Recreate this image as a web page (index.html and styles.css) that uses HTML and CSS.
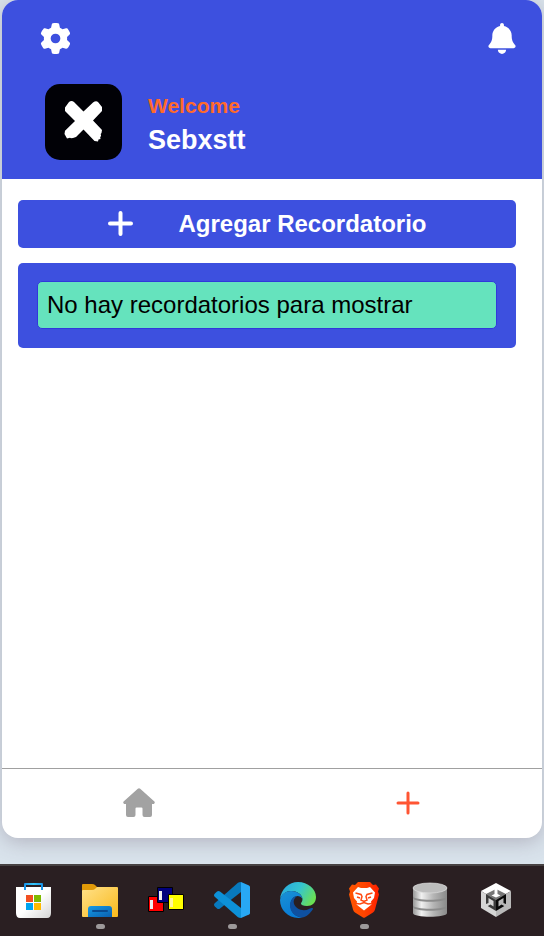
FILE: index.html
```html
<!DOCTYPE html>
<html lang="es">
<head>
<meta charset="utf-8">
<meta name="viewport" content="width=device-width, initial-scale=1">
<title>Recordatorios</title>
<link rel="stylesheet" href="styles.css">
</head>
<body>
<div class="app">
  <header class="header">
    <div class="toolbar">
      <button class="icon-button" type="button" aria-label="Ajustes">
        <svg class="gear" viewBox="0 0 512 512" fill="currentColor"><path d="M495.9 166.6c3.2 8.7 .5 18.4-6.4 24.6l-43.3 39.4c1.1 8.3 1.7 16.8 1.7 25.4s-.6 17.1-1.7 25.4l43.3 39.4c6.9 6.2 9.6 15.9 6.4 24.6c-4.4 11.9-9.7 23.3-15.8 34.3l-4.7 8.1c-6.6 11-14 21.4-22.1 31.2c-5.9 7.2-15.7 9.6-24.5 6.8l-55.7-17.7c-13.4 10.3-28.2 18.9-44 25.4l-12.5 57.1c-2 9.1-9 16.3-18.2 17.8c-13.8 2.3-28 3.5-42.5 3.5s-28.7-1.2-42.5-3.5c-9.2-1.5-16.2-8.7-18.2-17.8l-12.5-57.1c-15.8-6.5-30.6-15.1-44-25.4L83.1 425.9c-8.8 2.8-18.6 .3-24.5-6.8c-8.1-9.8-15.5-20.2-22.1-31.2l-4.7-8.1c-6.1-11-11.4-22.4-15.8-34.3c-3.2-8.7-.5-18.4 6.4-24.6l43.3-39.4C64.6 273.1 64 264.6 64 256s.6-17.1 1.7-25.4L22.4 191.2c-6.9-6.2-9.6-15.9-6.4-24.6c4.4-11.9 9.7-23.3 15.8-34.3l4.7-8.1c6.6-11 14-21.4 22.1-31.2c5.9-7.2 15.7-9.6 24.5-6.8l55.7 17.7c13.4-10.3 28.2-18.9 44-25.4l12.5-57.1c2-9.1 9-16.3 18.2-17.8C227.3 1.2 241.5 0 256 0s28.7 1.2 42.5 3.5c9.2 1.5 16.2 8.7 18.2 17.8l12.5 57.1c15.8 6.5 30.6 15.1 44 25.4l55.7-17.7c8.8-2.8 18.6-.3 24.5 6.8c8.1 9.8 15.5 20.2 22.1 31.2l4.7 8.1c6.1 11 11.4 22.4 15.8 34.3zM256 336a80 80 0 1 0 0-160 80 80 0 1 0 0 160z"/></svg>
      </button>
      <button class="icon-button" type="button" aria-label="Notificaciones">
        <svg class="bell" viewBox="0 0 448 512" fill="currentColor"><path d="M224 0c-17.7 0-32 14.3-32 32V51.2C119 66 64 130.6 64 208v18.8c0 47-17.3 92.4-48.5 127.6l-7.4 8.3c-8.4 9.4-10.4 22.9-5.3 34.4S19.4 416 32 416H416c12.6 0 24-7.4 29.2-18.9s3.1-25-5.3-34.4l-7.4-8.3C401.3 319.2 384 273.9 384 226.8V208c0-77.4-55-142-128-156.8V32c0-17.700-14.300-32-32-32zm68 442H156c0 17 9 38 22.700 51.300s28.300 18.700 45.300 18.700s33.300-6.700 45.300-18.700S292 459 292 442z"/></svg>
      </button>
    </div>
    <div class="profile">
      <svg class="avatar" viewBox="0 0 77 76" role="img" aria-label="Avatar">
        <path fill="#fff" d="M20 23.500l4-5.500q2.500-2 5 0l9.500 9.500L48 18.500q3-2 5-.5l4 5v4L48 36.500l9 9.500-.5 3-.8 1 .4 2-.9 1 .3 2-2 .5-.5 2-3.500-.5L38.500 45.500 31 53l-3 1-2 .3-1-.5-3 .7-2.500-4.500.5-3.300L30 37 20 27z"/>
      </svg>
      <div class="profile-text">
        <p class="welcome">Welcome</p>
        <h1 class="name">Sebxstt</h1>
      </div>
    </div>
  </header>

  <main class="content">
    <button class="add-button" type="button">
      <svg class="add-icon" viewBox="0 0 26 26" fill="none" stroke="currentColor" stroke-width="4" stroke-linecap="round"><path d="M13.500 2v21M3 12.500h21"/></svg>
      <span>Agregar Recordatorio</span>
    </button>
    <section class="reminders">
      <p class="empty">No hay recordatorios para mostrar</p>
    </section>
  </main>

  <nav class="tabs">
    <a class="tab" href="#inicio" aria-label="Inicio">
      <svg class="home-icon" viewBox="0 0 32 29" fill="currentColor"><path d="M14.800 .7q1.200-1 2.400 0L31.400 13.600q1 1.400-.6 2.400H29v11q0 2-2 2h-5.500q-2 0-2-2v-6.500q0-1-1-1h-5q-1 0-1 1V27q0 2-2 2H5q-2 0-2-2V16H1.200q-1.600-1-.6-2.400z"/></svg>
    </a>
    <a class="tab tab-active" href="#nuevo" aria-label="Nuevo">
      <svg class="plus-icon" viewBox="0 0 24 24" fill="none" stroke="currentColor" stroke-width="3" stroke-linecap="round"><path d="M12 2v20M2 12h20"/></svg>
    </a>
  </nav>
</div>

<footer class="taskbar">
  <button class="task" type="button" aria-label="Microsoft Store">
    <svg viewBox="0 0 36 36">
      <defs>
        <linearGradient id="bag" x1="0" y1="0" x2="1" y2="1"><stop offset=".5" stop-color="#fff"/><stop offset="1" stop-color="#d5d5d5"/></linearGradient>
        <linearGradient id="handle" x1="0" y1="0" x2="1" y2="0"><stop stop-color="#1691e8"/><stop offset=".5" stop-color="#38c7f8"/><stop offset="1" stop-color="#1691e8"/></linearGradient>
      </defs>
      <path fill="url(#bag)" d="M0 5h35v26q0 5-4 5H4q-4 0-4-5z"/>
      <path fill="url(#handle)" d="M8 8V2q0-1 1-1h17q1 0 1 1v6h-2V3H10v5z"/>
      <path fill="#f25022" d="M10 13h7v7h-7z"/><path fill="#7fba00" d="M18 13h7v7h-7z"/>
      <path fill="#00a4ef" d="M10 21h7v7h-7z"/><path fill="#ffb900" d="M18 21h7v7h-7z"/>
    </svg>
  </button>
  <button class="task running" type="button" aria-label="Explorador de archivos">
    <svg viewBox="0 0 36 36">
      <defs>
        <linearGradient id="folder" x1="0" y1="0" x2="1" y2="1"><stop stop-color="#ffe18a"/><stop offset="1" stop-color="#f9b91b"/></linearGradient>
        <linearGradient id="drawer" x1="0" y1="0" x2="1" y2="1"><stop stop-color="#159be6"/><stop offset="1" stop-color="#0a5fae"/></linearGradient>
      </defs>
      <path fill="#e19a08" d="M0 3q0-1 1-1h9q2 0 3 1l3 3v5H0z"/>
      <path fill="url(#folder)" d="M15 5h20q1 0 1 1v28q0 1-1 1H1q-1 0-1-1V9q0-1 1-1h9q2 0 3-1z"/>
      <path fill="url(#drawer)" d="M6 35v-8q0-3 3-3h18q3 0 3 3v8z"/>
      <path stroke="#084b91" stroke-width="2" stroke-linecap="round" d="M11 29h14"/>
    </svg>
  </button>
  <button class="task" type="button" aria-label="Bloques">
    <svg viewBox="0 0 36 36" stroke="#000">
      <path fill="#f00" d="M.5 14.500h15v15H.5z"/><path fill="#eee" stroke="none" d="M2 18h3v9H2z"/>
      <path fill="#00007c" d="M9.500 5.500h15v15h-15z"/><path fill="#eee" stroke="none" d="M11 9h3v9h-3z"/>
      <path fill="#ff0" d="M20.500 12.500h15v15h-15z"/><path fill="#fff5a0" stroke="none" d="M22 16h3v9h-3z"/>
    </svg>
  </button>
  <button class="task running" type="button" aria-label="Visual Studio Code">
    <svg viewBox="0 0 36 36">
      <path fill="#0879bd" d="M27 0v10L6 26.500q-1.500 1-3 0L.7 24.300q-1.400-1.500 0-3L24 .7q1-.7 3-.7z"/>
      <path fill="#0d91d8" d="M27 36V26L6 9.500q-1.500-1-3 0L.7 11.700q-1.400 1.500 0 3L24 35.300q1 .7 3 .7z"/>
      <path fill="#28a8f4" d="M27 0l8 3.500q1 .5 1 1.500v26q0 1-1 1.500L27 36z"/>
    </svg>
  </button>
  <button class="task" type="button" aria-label="Microsoft Edge">
    <svg viewBox="0 0 36 36">
      <defs>
        <linearGradient id="wave" x1="0" y1=".2" x2="1" y2=".6"><stop stop-color="#28a9df"/><stop offset=".5" stop-color="#35c5cf"/><stop offset="1" stop-color="#6be052"/></linearGradient>
        <linearGradient id="sea" x1="0" y1="0" x2=".5" y2="1"><stop stop-color="#1a91d4"/><stop offset="1" stop-color="#087bd7"/></linearGradient>
      </defs>
      <path fill="url(#wave)" d="M0 17C1 7 9 0 18 0c10 0 18 7 18 15 0 6-4 9-9 9-4 0-6-1-6-2.500 0-1 1.500-1.500 1.500-4.500C22 12 17 9 11 9 6 9 2 12 0 17z"/>
      <path fill="url(#sea)" d="M0 18C1 12 6 9 11 9c7 0 11 4 11.500 8-1-2-3-3-5-3-4 0-7 4-7 9 0 7 5 12 12 12.500C10 38 0 29 0 18z"/>
      <path fill="#0e50a0" d="M17 14c-3 2-4 5-3 8 2 5 9 8 15 5 3-1.500 4-1 4 0-3 5-7 8-11 8.500-7-.5-12-5.500-12-12 0-5 3-9 7-9.500z"/>
    </svg>
  </button>
  <button class="task running" type="button" aria-label="Brave">
    <svg viewBox="0 0 36 36">
      <defs><linearGradient id="lion" x1="0" y1="0" x2="1" y2="0"><stop stop-color="#ff5601"/><stop offset=".5" stop-color="#ff4500"/><stop offset="1" stop-color="#ff2000"/></linearGradient></defs>
      <path fill="url(#lion)" d="M12 0h12l3 3 3-.5 3 4-1 3 1 3-4 15q-.5 2-2 3l-8 5q-1 .7-2 0l-8-5q-1.500-1-2-3L3 12.500l1-3-1-3 3-4 3 .5z"/>
      <path fill="#fff" d="M12 5l3 1h6l3-1 5 5.500-1 5.500-3 3.500 .5 3L18 28.500 10.500 22.500l.5-3L8 16 7 10.500z"/>
      <path fill="none" stroke="#ff4a12" stroke-width="1.500" d="M9.500 11l5.500 1.500 1 2-1 3.500 3 1.500 3-1.500-1-3.500 1-2 5.500-1.500M10 21.500l4 .5 4-1.500 4 1.500 4-.5M11 15l3 1M25 15l-3 1"/>
    </svg>
  </button>
  <button class="task" type="button" aria-label="Base de datos">
    <svg viewBox="0 0 36 36">
      <defs><linearGradient id="disk" x1="0" y1="0" x2="1" y2="0"><stop stop-color="#989898"/><stop offset=".25" stop-color="#f0f0f0"/><stop offset=".6" stop-color="#b5b5b5"/><stop offset="1" stop-color="#8a8a8a"/></linearGradient></defs>
      <path fill="url(#disk)" d="M1 25v6c0 5 34 5 34 0v-6z"/><path fill="#8c8c8c" d="M1 23v2c0 5 34 5 34 0v-2z"/>
      <path fill="url(#disk)" d="M1 16v7c0 5 34 5 34 0v-7z"/><path fill="#8c8c8c" d="M1 14v2c0 5 34 5 34 0v-2z"/>
      <path fill="url(#disk)" d="M1 6v8c0 5 34 5 34 0V6z"/>
      <ellipse cx="18" cy="6" rx="17" ry="5" fill="#bdbdbd" stroke="#ddd" stroke-width=".7"/>
    </svg>
  </button>
  <button class="task" type="button" aria-label="Unity Hub">
    <svg viewBox="0 0 36 36">
      <path fill="#fff" d="M18 1l15 8-15 9L3 9z"/><path fill="#d5d5d5" d="M3 9l15 9v17L3 26z"/><path fill="#b9b9b9" d="M33 9l-15 9v17l15-9z"/>
      <path fill="#777" d="M18 7l10 5-10 6-10-6z"/><path fill="#3a3a3a" d="M8 12l10 6v11L8 23z"/><path fill="#080808" d="M28 12l-10 6v11l10-6z"/>
      <path fill="#fff" d="M16.500 6h3v6l3 1.500-4.500 2-4.500-2 3-1.500z"/>
      <path fill="#d5d5d5" d="M10.500 16l5 3v5.500l-3-2L8 25v-3l2.500-1z"/><path fill="#b9b9b9" d="M25.500 16l-5 3v5.500l3-2L28 25v-3l-2.500-1z"/>
    </svg>
  </button>
</footer>
</body>
</html>
```
FILE: styles.css
```css
* {
  box-sizing: border-box;
}

body {
  margin: 0;
  min-height: 100vh;
  display: flex;
  flex-direction: column;
  background: #d9e3ec;
  font-family: "Liberation Sans", Arial, sans-serif;
}

p,
h1 {
  margin: 0;
}

button {
  border: 0;
  padding: 0;
  font: inherit;
  cursor: pointer;
}

svg {
  display: block;
}

.app {
  flex: 1;
  display: flex;
  flex-direction: column;
  margin: 0 2px 26px;
  border-radius: 16px;
  overflow: hidden;
  background: #fff;
  box-shadow: 0 4px 20px rgba(90, 70, 90, 0.3);
}

.header {
  padding: 23px 26px 19px 38px;
  background: #3d50df;
  color: #fff;
}

.toolbar {
  display: flex;
  justify-content: space-between;
}

.icon-button {
  background: none;
  color: inherit;
}

.gear {
  width: 31px;
  height: 31px;
}

.bell {
  width: 28px;
  height: 31px;
}

.profile {
  display: flex;
  align-items: center;
  gap: 26px;
  margin-top: 30px;
  padding-left: 5px;
}

.avatar {
  width: 77px;
  height: 76px;
  border-radius: 15px;
  background: #010106;
}

.profile-text {
  padding-top: 4px;
}

.welcome {
  color: #ff6a2b;
  font-size: 21px;
  font-weight: 700;
  line-height: 32px;
}

.name {
  font-size: 27px;
  line-height: 36px;
}

.content {
  flex: 1;
  display: flex;
  flex-direction: column;
  gap: 15px;
  padding: 21px 26px 21px 16px;
}

.add-button {
  display: flex;
  align-items: center;
  justify-content: center;
  gap: 45px;
  height: 48px;
  border-radius: 5px;
  background: #3d50df;
  color: #fff;
  font-size: 24px;
  font-weight: 700;
}

.add-icon {
  width: 26px;
  height: 26px;
}

.reminders {
  padding: 18px 19px 19px;
  border-radius: 5px;
  background: #3d50df;
}

.empty {
  padding: 9px;
  border: 1px solid #3038dc;
  border-radius: 5px;
  background: #65e3bd;
  color: #000;
  font-size: 24px;
  line-height: 28px;
}

.tabs {
  display: flex;
  height: 70px;
  padding: 0 0 2px 3px;
  border-top: 1px solid #a0a0a0;
}

.tab {
  flex: 1;
  display: flex;
  align-items: center;
  justify-content: center;
  color: #a2a2a2;
}

.tab-active {
  color: #ff5533;
}

.home-icon {
  width: 32px;
  height: 29px;
}

.plus-icon {
  width: 24px;
  height: 24px;
}

.taskbar {
  display: flex;
  gap: 30px;
  height: 72px;
  padding: 16px 16px 0;
  border-top: 2px solid #474243;
  background: #2a1f22;
}

.task {
  display: flex;
  flex-direction: column;
  align-items: center;
  gap: 6px;
  background: none;
}

.task svg {
  width: 36px;
  height: 36px;
}

.running::after {
  content: "";
  width: 9px;
  height: 5px;
  border-radius: 3px;
  background: #9d999a;
}
```
